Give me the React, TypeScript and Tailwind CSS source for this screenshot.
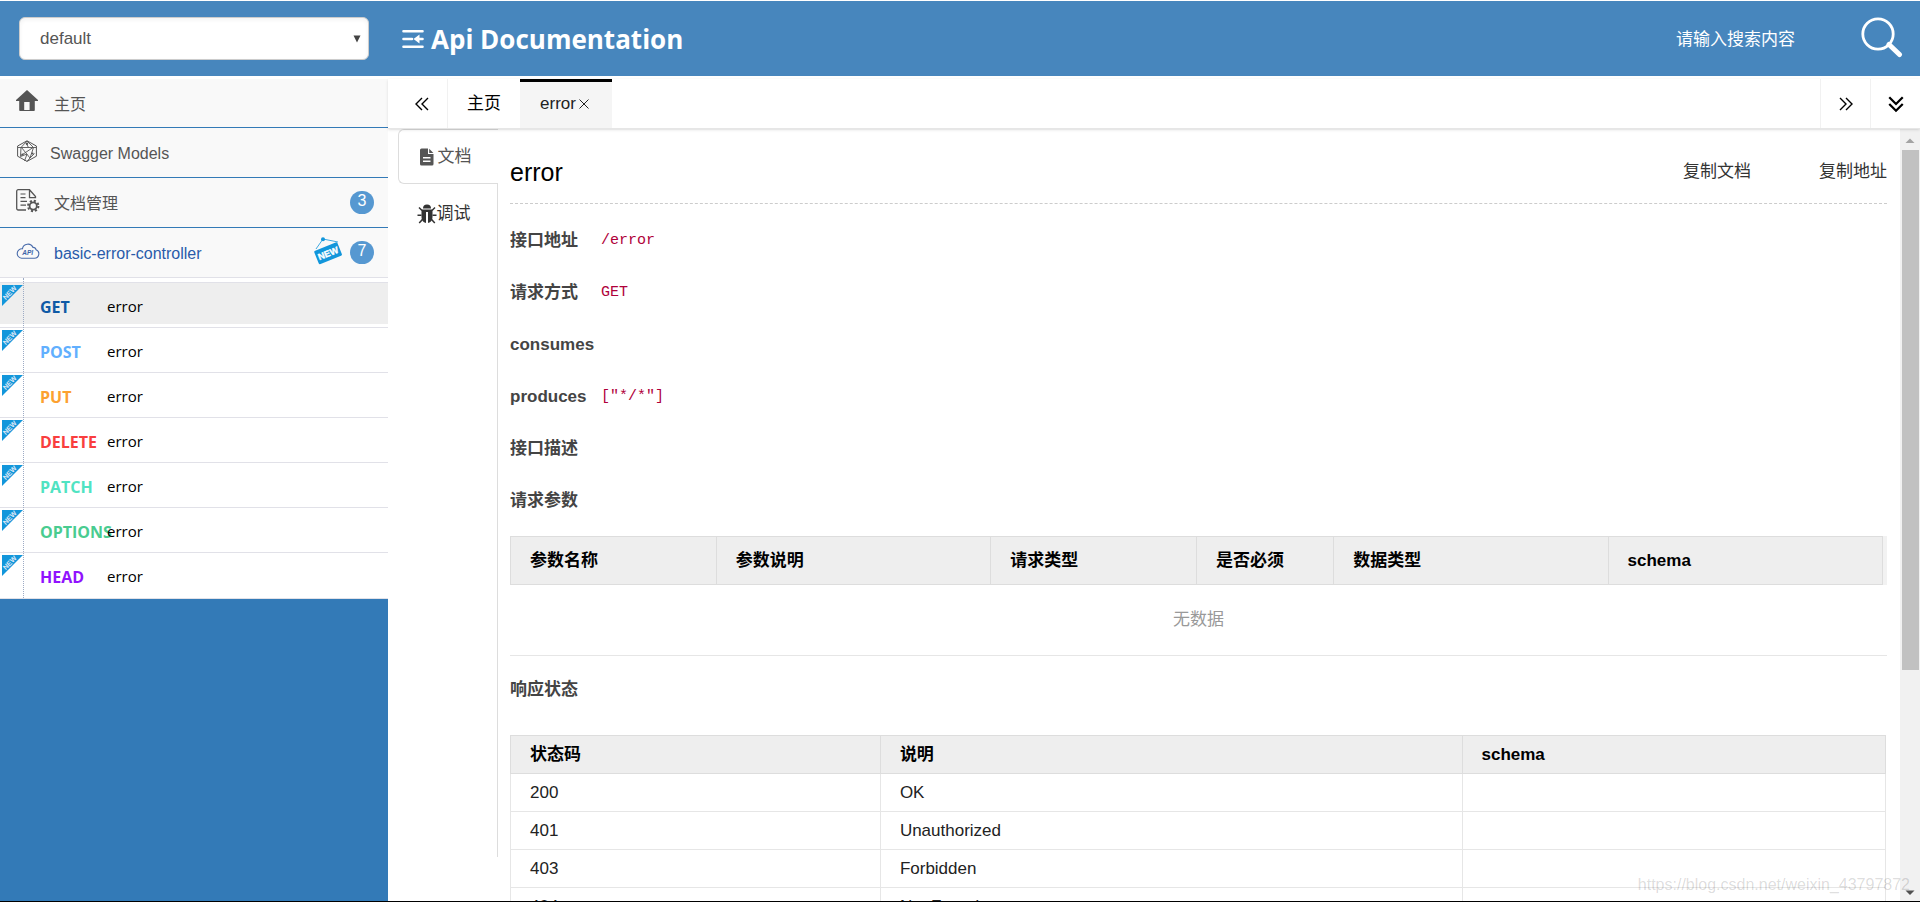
const menus = [
  { title: "主页", icon: HomeIcon, gap: "mr-3" },
  { title: "Swagger Models", icon: ModelsIcon, gap: "mr-2" },
  { title: "文档管理", icon: DocIcon, gap: "mr-3", count: 3 },
]

const apis = [
  { method: "GET", path: "error", color: "text-[#0f5aa6]" },
  { method: "POST", path: "error", color: "text-[#61affe]" },
  { method: "PUT", path: "error", color: "text-[#fca130]" },
  { method: "DELETE", path: "error", color: "text-[#f93e3e]" },
  { method: "PATCH", path: "error", color: "text-[#50e3c2]" },
  { method: "OPTIONS", path: "error", color: "text-[#49cc90]" },
  { method: "HEAD", path: "error", color: "text-[#9012fe]" },
]

const details = [
  { label: "接口地址", value: "/error" },
  { label: "请求方式", value: "GET" },
  { label: "consumes", value: "" },
  { label: "produces", value: '["*/*"]' },
  { label: "接口描述", value: "" },
  { label: "请求参数", value: "" },
]

const params = [
  { title: "参数名称", width: "w-[15%]" },
  { title: "参数说明", width: "w-[20%]" },
  { title: "请求类型", width: "w-[15%]" },
  { title: "是否必须", width: "w-[10%]" },
  { title: "数据类型", width: "w-[20%]" },
  { title: "schema", width: "w-[20%]" },
]

const statuses = [
  { code: "200", text: "OK" },
  { code: "401", text: "Unauthorized" },
  { code: "403", text: "Forbidden" },
  { code: "404", text: "Not Found" },
]

function HomeIcon() {
  return (
    <svg viewBox="0 0 22 22" className="w-[22px] h-[22px]" fill="#555">
      <path d="M11 0 22 10V11H18.8V20.3A0.8 0.8 0 0 1 18 21H4A0.8 0.8 0 0 1 3.2 20.3V11H0V10ZM8.2 12V20H13.6V12Z" fillRule="evenodd" />
    </svg>
  )
}

function ModelsIcon() {
  return (
    <svg viewBox="0 0 22 22" className="w-[22px] h-[22px]" fill="none" stroke="#555">
      <path d="M11 0.8 20.4 6V16.2L11 21.4 1.6 16.2V6Z" />
      <path d="M2 7.5H20M11 1 5 7.5 4.5 16.5 11 14 8.5 21M11 1 17.5 7.5 14 18 11 21.4M5 15.5 17 7.5M5.5 7.5 14 18 18.5 13.5M10 3 12.5 7.5" strokeWidth="0.9" />
      <circle cx="11" cy="3.8" r="1.2" fill="#555" stroke="none" />
      <circle cx="6.5" cy="14.5" r="1.1" fill="#555" stroke="none" />
      <circle cx="16.5" cy="13.5" r="1.1" fill="#555" stroke="none" />
    </svg>
  )
}

function DocIcon() {
  return (
    <svg viewBox="0 0 24 24" className="w-6 h-6" fill="none" stroke="#555" strokeWidth="1.3">
      <path d="M10 21H2.2a1.5 1.5 0 0 1-1.5-1.5V2.2A1.5 1.5 0 0 1 2.2 0.7H13.5l6 6.8V8.6H13.5V0.7" />
      <path d="M4.5 5H9.5M4.5 8.7H9.5M4.5 12.4H11M4.5 16.1H10" strokeWidth="1.2" />
      <circle cx="17.2" cy="17" r="3.6" strokeWidth="1.8" />
      <circle cx="17.2" cy="17" r="5.2" strokeWidth="2" strokeDasharray="2.1 1.98" />
    </svg>
  )
}

function CloudIcon() {
  return (
    <svg viewBox="0 0 24 16" className="w-6 h-4" fill="none" stroke="#4a6cab" strokeWidth="1.1">
      <path d="M5.5 15.2H18.5A4.4 4.4 0 0 0 20 6.7 2.9 2.9 0 0 0 17 4.4 5.6 5.6 0 0 0 6.4 5.8 4.7 4.7 0 0 0 5.5 15.2Z" />
      <text x="6.2" y="11.6" fontSize="6.5" fontStyle="italic" fontWeight="700" fontFamily="Liberation Sans, sans-serif" fill="#3c64a8" stroke="none">API</text>
    </svg>
  )
}

function NewSign() {
  return (
    <svg viewBox="0 0 28 28" className="mb-1 w-7 h-7">
      <path d="M2 12 9 2 24 5" fill="none" stroke="#1296db" strokeWidth="0.8" />
      <circle cx="9" cy="2.2" r="2" fill="#1296db" />
      <g transform="rotate(-22 14 16)">
        <rect x="1.5" y="9" width="25" height="14.5" rx="1.5" fill="#1296db" />
        <text x="14" y="19.5" textAnchor="middle" fontSize="9" fontWeight="900" fontFamily="Liberation Sans, sans-serif" fill="#fff" stroke="#fff" strokeWidth="0.4">NEW</text>
      </g>
    </svg>
  )
}

function NewCorner() {
  return (
    <svg viewBox="0 0 21 21" className="absolute left-0.5 top-0.5 w-[21px] h-[21px] overflow-visible">
      <path d="M0 0H21L0 21Z" fill="#1296db" />
      <text x="7.6" y="10.2" transform="rotate(-45 7.6 7.6)" textAnchor="middle" fontSize="7" fontWeight="700" fontFamily="Liberation Sans, sans-serif" fill="#dbe6f5">NEW</text>
    </svg>
  )
}

function CollapseIcon() {
  return (
    <svg viewBox="0 0 22 20" className="w-[22px] h-5" fill="none" stroke="#fff" strokeWidth="2.6" strokeLinecap="round">
      <path d="M1.5 2.2H20.5M1.5 10H10M1.5 17.8H20.5M16 10H20.5" />
      <path d="M11.5 10 17.5 5.4V14.6Z" fill="#fff" stroke="none" />
    </svg>
  )
}

function SearchIcon() {
  return (
    <svg viewBox="0 0 42 42" className="w-[42px] h-[42px]" fill="none" stroke="#fff">
      <circle cx="17" cy="17" r="15.2" strokeWidth="2.8" />
      <path d="M28 27.5 38.5 37.5" strokeWidth="5" strokeLinecap="round" />
    </svg>
  )
}

function FileIcon() {
  return (
    <svg viewBox="0 0 14 18" className="w-3.5 h-[18px]" fill="#555">
      <path d="M1.5 0.5H8V6H13.5V16A1.5 1.5 0 0 1 12 17.5H1.5A1.5 1.5 0 0 1 0 16V2A1.5 1.5 0 0 1 1.5 0.5ZM3 9V10.5H10.5V9ZM3 12.5V14H10.5V12.5Z" fillRule="evenodd" />
      <path d="M9.2 0.8 13.4 5H9.2Z" />
    </svg>
  )
}

function BugIcon() {
  return (
    <svg viewBox="0 0 20 20" className="w-5 h-5" fill="#333" stroke="#333">
      <path d="M6 4.4A4 4 0 0 1 14 4.4Z" stroke="none" />
      <path d="M4.5 5.5H15.5V13C15.5 16 14 18.5 11 19V8H9V19C6 18.5 4.5 16 4.5 13Z" stroke="none" />
      <path d="M2 3.5 5 6.5M18 3.5 15 6.5M0.5 11.2H4.5M19.5 11.2H15.5M2.2 19 5.4 15.4M17.8 19 14.6 15.4" strokeWidth="1.5" fill="none" />
    </svg>
  )
}

function DoubleArrow({ turn, bold }: { turn?: string; bold?: boolean }) {
  return (
    <svg viewBox="0 0 16 16" className={`${bold ? "w-[18px] h-[18px]" : "w-4 h-4"} ${turn ?? ""}`} fill="none" stroke="#000" strokeWidth={bold ? 2 : 1.4}>
      <path d="M8 2 2 8 8 14M14 2 8 8 14 14" />
    </svg>
  )
}

function Header() {
  return (
    <header className="mt-px mb-[3px] flex h-[75px] shrink-0 items-center bg-[#4786bd] text-white">
      <div className="relative ml-[19px] w-[350px]">
        <select
          aria-label="group"
          className="h-[43px] w-full appearance-none rounded-md border border-[#ccc] bg-white pl-5 text-[17px] text-[#555] shadow-inner"
        >
          <option>default</option>
        </select>
        <svg viewBox="0 0 8 8" className="pointer-events-none absolute right-2 top-[18px] w-2 h-2" fill="#444">
          <path d="M0.5 0.5H7.5L4 7.5Z" />
        </svg>
      </div>
      <button className="ml-[33px] pt-px" aria-label="collapse">
        <CollapseIcon />
      </button>
      <h1 className="ml-[7px] pt-0.5 font-['Open_Sans',sans-serif] text-[26px] font-bold">Api Documentation</h1>
      <input
        aria-label="search"
        placeholder="请输入搜索内容"
        className="ml-auto mr-[15px] w-[170px] bg-transparent pt-0.5 text-[17px] outline-none placeholder:text-white"
      />
      <button className="mr-[17px] pb-0.5" aria-label="submit search">
        <SearchIcon />
      </button>
    </header>
  )
}

function Badge({ count }: { count: number }) {
  return (
    <span className="h-[23px] w-6 rounded-full bg-[#5698d1] text-center text-base leading-5 text-white">{count}</span>
  )
}

function Sidebar() {
  return (
    <aside className="w-[388px] shrink-0 bg-[#337ab7] text-base text-[#555]">
      <nav>
        {menus.map(({ title, icon: Icon, gap, count }) => (
          <a key={title} href="#" className="flex h-[50px] items-center border-b border-[#337ab7] bg-[#f9f9f9] pl-4 pr-3.5 nth-1:h-[49px]">
            <span className={`flex w-[26px] pb-1 ${gap}`}>
              <Icon />
            </span>
            <span className="pt-[3px]">{title}</span>
            {count && (
              <span className="ml-auto flex">
                <Badge count={count} />
              </span>
            )}
          </a>
        ))}
        <a href="#" className="flex h-[50px] items-center border-b border-[#e1e1e8] bg-[#f9f9f9] pl-4 pr-3.5 text-[#2a5caa]">
          <span className="mr-3 flex w-[26px] pb-1">
            <CloudIcon />
          </span>
          <span className="pt-[3px]">basic-error-controller</span>
          <span className="ml-auto flex items-center gap-2">
            <NewSign />
            <Badge count={7} />
          </span>
        </a>
      </nav>
      <ul className="relative border-b border-[#e1e1e8] bg-white pt-1 pb-px font-['Open_Sans',sans-serif] text-[15px] text-black">
        {apis.map((api, index) => (
          <li key={api.method} className="relative h-[45px] border-t border-[#e1e1e8]">
            <a href="#" className={`flex h-[41px] items-center pl-10 pt-1.5 ${index === 0 ? "bg-[#eee]" : ""}`}>
              <span className={`w-[67px] text-base font-bold ${api.color}`}>{api.method}</span>
              {api.path}
            </a>
            <NewCorner />
          </li>
        ))}
        <li aria-hidden="true" className="absolute left-[23px] inset-y-0 border-l border-dotted border-[#9dabc4]" />
      </ul>
    </aside>
  )
}

function TabBar() {
  return (
    <div className="relative flex h-[50px] shrink-0 items-stretch border-b border-[#e6e6e6] text-[17px] text-black shadow-sm">
      <button className="flex w-[60px] items-center justify-center border-r border-[#f1f1f1] pl-2" aria-label="previous tabs">
        <DoubleArrow />
      </button>
      <button className="w-[72px]">主页</button>
      <button className="flex w-[92px] items-center justify-center border-t-[3px] border-black bg-[#f5f5f5] pr-0.5 pb-[3px] text-[#222]">
        error
        <svg viewBox="0 0 12 12" className="ml-0.5 w-3 h-3" fill="none" stroke="#222">
          <path d="M1.5 1.5 10.5 10.5M10.5 1.5 1.5 10.5" />
        </svg>
      </button>
      <button className="ml-auto flex w-[50px] items-center justify-center border-l border-[#f1f1f1]" aria-label="next tabs">
        <DoubleArrow turn="rotate-180" />
      </button>
      <button className="flex w-[50px] items-center justify-center border-l border-[#f1f1f1]" aria-label="tab menu">
        <DoubleArrow turn="-rotate-90" bold />
      </button>
    </div>
  )
}

function SideTabs() {
  return (
    <div className="mb-[44px] ml-[10px] flex w-[100px] shrink-0 flex-col text-[17px]">
      <button className="flex h-[55px] items-center justify-center rounded-l-md border border-r-0 border-[#ddd] pr-1.5 text-[#555]">
        <FileIcon />
        <span className="ml-1">文档</span>
      </button>
      <button className="flex h-[60px] items-center justify-center border-r border-[#ddd] pr-2 text-[#333]">
        <BugIcon />
        调试
      </button>
      <div className="grow border-r border-[#ddd]" />
    </div>
  )
}

function ParamTable() {
  return (
    <div className="mt-[9px] border-b border-[#e6e6e6]">
      <div className="bg-[#f2f2f2] pr-1">
        <table className="w-full table-fixed border-collapse">
          <thead>
            <tr className="h-12 bg-[#eee]">
              {params.map((col) => (
                <th key={col.title} className={`border border-[#ddd] px-[19px] text-left font-bold ${col.width}`}>
                  {col.title}
                </th>
              ))}
            </tr>
          </thead>
        </table>
      </div>
      <p className="text-center leading-[70px] text-[#999]">无数据</p>
    </div>
  )
}

function StatusTable() {
  return (
    <table className="w-full table-fixed border-collapse">
      <thead>
        <tr className="h-[38px] bg-[#eee] text-left">
          <th className="w-[26.9%] border border-[#ddd] px-[19px]">状态码</th>
          <th className="border border-[#ddd] px-[19px]">说明</th>
          <th className="w-[30.8%] border border-[#ddd] px-[19px]">schema</th>
        </tr>
      </thead>
      <tbody className="text-[#222]">
        {statuses.map((status) => (
          <tr key={status.code} className="h-[38px]">
            <td className="border border-[#e6e6e6] px-[19px]">{status.code}</td>
            <td className="border border-[#e6e6e6] px-[19px]">{status.text}</td>
            <td className="border border-[#e6e6e6] px-[19px]"></td>
          </tr>
        ))}
      </tbody>
    </table>
  )
}

function Doc() {
  return (
    <main className="ml-3 mr-[13px] min-w-0 grow overflow-hidden text-[17px] leading-6 text-black">
      <div className="flex h-[75px] items-center border-b border-dashed border-[#ccc] pt-3">
        <h2 className="text-[25px]">error</h2>
        <button className="ml-auto text-[#333]">复制文档</button>
        <button className="ml-[68px] text-[#333]">复制地址</button>
      </div>
      <dl className="pt-[11px]">
        {details.map((row) => (
          <div key={row.label} className="flex h-[52px] items-center">
            <dt className="w-[91px] font-bold text-[#444]">{row.label}</dt>
            <dd className="font-['Liberation_Mono',monospace] text-[15px] text-[#b0003a]">{row.value}</dd>
          </div>
        ))}
      </dl>
      <ParamTable />
      <h3 className="py-[22px] font-bold text-[#444]">响应状态</h3>
      <div className="mt-[11px] pr-px">
        <StatusTable />
      </div>
    </main>
  )
}

function Scrollbar() {
  return (
    <div className="flex w-5 shrink-0 flex-col items-center bg-[#f1f1f1]" aria-hidden="true">
      <svg viewBox="0 0 20 21" className="h-[21px] w-5 shrink-0" fill="#a3a3a3">
        <path d="M5.5 14 10 9.5 14.5 14Z" />
      </svg>
      <div className="h-[67.3%] w-[17px] bg-[#c1c1c1]" />
      <svg viewBox="0 0 20 20" className="mt-auto h-5 w-5 shrink-0" fill="#505050">
        <path d="M5.5 9.5H14.5L10 14Z" />
      </svg>
    </div>
  )
}

export default function App() {
  return (
    <div className="relative flex h-screen flex-col overflow-hidden border-b border-black bg-white font-['Liberation_Sans','Noto_Sans_CJK_SC',sans-serif]">
      <Header />
      <div className="flex min-h-0 grow">
        <Sidebar />
        <div className="flex min-w-0 grow flex-col">
          <TabBar />
          <div className="flex min-h-0 grow">
            <SideTabs />
            <Doc />
            <Scrollbar />
          </div>
        </div>
      </div>
      <p className="pointer-events-none absolute bottom-1 right-2.5 text-base text-black/15">
        https://blog.csdn.net/weixin_43797872
      </p>
    </div>
  )
}
